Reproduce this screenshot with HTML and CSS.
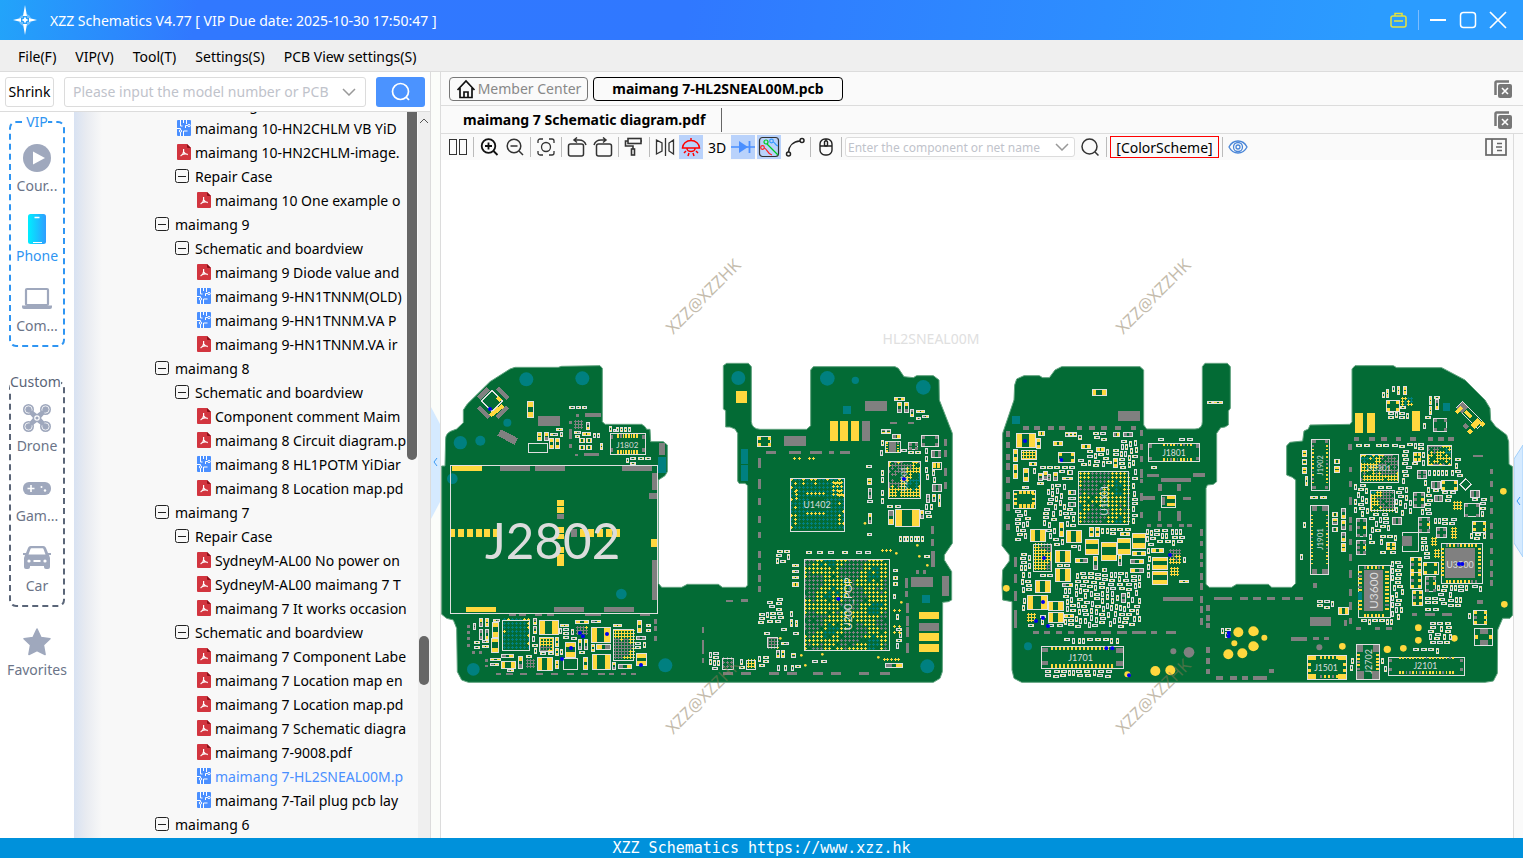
FILE: index.html
```html
<!DOCTYPE html>
<html lang="en">
<head>
    <meta charset="UTF-8">
    <meta name="viewport" content="width=device-width, initial-scale=1.0">
    <title>XZZ Schematics</title>
    <link rel="stylesheet" href="styles.css">
</head>
<body>
    <svg class="sprite" width="0" height="0">
        <symbol id="pdf" viewBox="0 0 14 16">
            <path d="M1 0h9l4 4v11a1 1 0 0 1-1 1H1a1 1 0 0 1-1-1V1a1 1 0 0 1 1-1z" fill="#d2353f"/>
            <path d="M10 0l4 4h-3a1 1 0 0 1-1-1z" fill="#8c0f18"/>
            <path d="M6.600 5v2.500c0 2-1.500 3.500-3 4.500M6.800 8c.8 1.500 2.400 2.400 4 2.600M4.500 11c2-1.200 4-1.500 6-.8" fill="none" stroke="#fff" stroke-width="1.200"/>
        </symbol>
        <symbol id="pcb" viewBox="0 0 14 16">
            <rect width="14" height="16" rx="1" fill="#4a8fff"/>
            <path d="M3.500 0v6h2M6.500 0v3M9.500 0v4M11 5.500H8.500V8M0 8.500h3.500V10M6.500 16v-5h4M3.500 12v4" fill="none" stroke="#fff" stroke-width="1"/>
            <circle cx="12" cy="5.500" r="1.200" fill="#4a8fff" stroke="#fff"/>
            <circle cx="3.500" cy="11" r="1.200" fill="#4a8fff" stroke="#fff"/>
        </symbol>
        <symbol id="minus" viewBox="0 0 14 14">
            <rect x=".5" y=".5" width="13" height="13" rx="2" fill="none" stroke="#222"/>
            <path d="M3 7.500h8" stroke="#222"/>
        </symbol>
        <symbol id="closeall" viewBox="0 0 18 18">
            <path d="M1.500 15V2.500a1 1 0 0 1 1-1H15" fill="none" stroke="#777" stroke-width="2.500"/>
            <rect x="4" y="4" width="14" height="14" rx="2" fill="#777"/>
            <path d="M8 8l6 6M14 8l-6 6" stroke="#fff" stroke-width="1.600"/>
        </symbol>
    </svg>

    <header class="titlebar">
        <svg class="logo" viewBox="0 0 28 32" fill="#fff">
            <path d="M14 1l2 11h-4zM14 31l2-11h-4zM2 16l8-2v4zM26 16l-8-2v4z"/>
            <path d="M12 14v-3a7 7 0 0 0-4 3zM16 14h4a7 7 0 0 0-4-4zM12 18H8a7 7 0 0 0 4 4zM16 18v4a7 7 0 0 0 4-4z" opacity=".35"/>
            <path d="M14 12.500l1.200 2.300 2.300 1.200-2.300 1.200L14 19.500l-1.200-2.300-2.300-1.200 2.300-1.200z"/>
        </svg>
        <h1>XZZ Schematics V4.77 [ VIP Due date: 2025-10-30 17:50:47 ]</h1>
        <div class="window-buttons">
            <button aria-label="Toolbox">
                <svg width="18" height="18" fill="none" stroke="#e6e23c" stroke-width="1.500"><rect x="1" y="5" width="15" height="11" rx="2"/><path d="M5 5V2.500h7V5M4 10h9"/></svg>
            </button>
            <span class="divider"></span>
            <button aria-label="Minimize">
                <svg width="18" height="18"><path d="M1 9h16" stroke="#fff" stroke-width="2"/></svg>
            </button>
            <button aria-label="Maximize">
                <svg width="18" height="18"><rect x="1.500" y="1.500" width="15" height="15" rx="3" fill="none" stroke="#fff" stroke-width="1.500"/></svg>
            </button>
            <button aria-label="Close">
                <svg width="18" height="18"><path d="M1 1l16 16M17 1L1 17" stroke="#fff" stroke-width="1.700"/></svg>
            </button>
        </div>
    </header>

    <nav class="menubar">
        <button>File(F)</button>
        <button>VIP(V)</button>
        <button>Tool(T)</button>
        <button>Settings(S)</button>
        <button>PCB View settings(S)</button>
    </nav>

    <div class="workspace">
        <aside class="sidebar">
            <div class="search-row">
                <button class="shrink">Shrink</button>
                <div class="combo model">
                    <input type="text" aria-label="Model number" placeholder="Please input the model number or PCB">
                    <svg width="14" height="8"><path d="M1 1l6 6 6-6" fill="none" stroke="#999" stroke-width="1.500"/></svg>
                </div>
                <button class="search" aria-label="Search">
                    <svg width="20" height="20" fill="none" stroke="#fff" stroke-width="1.700"><circle cx="9.500" cy="9.500" r="8"/><path d="M15 15l3 3"/></svg>
                </button>
            </div>

            <div class="side-body">
                <div class="categories">
                    <fieldset class="group vip">
                        <legend>VIP</legend>
                        <button class="category">
                            <svg width="28" height="28"><circle cx="14" cy="14" r="14" fill="#9fa8bd"/><path d="M10 7.500v13l12-6.500z" fill="#fff"/></svg>
                            <span>Cour...</span>
                        </button>
                        <button class="category active">
                            <svg width="28" height="30"><defs><linearGradient id="ph"><stop offset="0" stop-color="#0ef"/><stop offset="1" stop-color="#2f9dff"/></linearGradient></defs><rect x="5" y="0" width="18" height="30" rx="2.500" fill="url(#ph)"/><path d="M11.500 3.500h5" stroke="#fff" stroke-width="1.500"/><path d="M10 28.500h9" stroke="#fff"/></svg>
                            <span>Phone</span>
                        </button>
                        <button class="category">
                            <svg width="30" height="28"><rect x="4" y="5" width="22" height="16" rx="1" fill="none" stroke="#9fa8bd" stroke-width="2.200"/><path d="M0 21.500h30v1.500a2 2 0 0 1-2 2H2a2 2 0 0 1-2-2z" fill="#9fa8bd"/></svg>
                            <span>Com...</span>
                        </button>
                    </fieldset>
                    <fieldset class="group custom">
                        <legend>Custom</legend>
                        <button class="category">
                            <svg width="28" height="28" fill="#9fa8bd"><path d="M6 4l8 6 8-6 2 3-6 7 6 7-2 3-8-6-8 6-2-3 6-7-6-7z"/><circle cx="5.500" cy="5.500" r="5.500"/><circle cx="22.500" cy="5.500" r="5.500"/><circle cx="5.500" cy="22.500" r="5.500"/><circle cx="22.500" cy="22.500" r="5.500"/><g fill="none" stroke="#fff" stroke-width=".8"><circle cx="5.500" cy="5.500" r="3.600"/><circle cx="22.500" cy="5.500" r="3.600"/><circle cx="5.500" cy="22.500" r="3.600"/><circle cx="22.500" cy="22.500" r="3.600"/><circle cx="14" cy="14" r="2.200" stroke-width="1.200"/></g><path d="M5 5l5 5M23 5l-5 5M5 23l5-5M23 23l-5-5" stroke="#9fa8bd" stroke-width="3"/></svg>
                            <span>Drone</span>
                        </button>
                        <button class="category">
                            <svg width="28" height="28"><rect y="8" width="28" height="13" rx="6" fill="#9fa8bd"/><path d="M4.500 14.500h7M8 11v7" stroke="#fff" stroke-width="1.600"/><circle cx="18.500" cy="13" r="1" fill="#fff"/><circle cx="22" cy="16.500" r="1.200" fill="#fff"/></svg>
                            <span>Gam...</span>
                        </button>
                        <button class="category">
                            <svg width="28" height="28"><path d="M0 9h3l2-5a3 3 0 0 1 3-2h12a3 3 0 0 1 3 2l2 5h3v2h-2l1 3v9a2 2 0 0 1-2 2h-2a2 2 0 0 1-2-2v-1H7v1a2 2 0 0 1-2 2H3a2 2 0 0 1-2-2v-9l1-3H0z" fill="#9fa8bd"/><path d="M7.500 5l-2 5.500h17l-2-5.500a1 1 0 0 0-1-.8h-11a1 1 0 0 0-1 .8z" fill="#fff"/><circle cx="6" cy="17" r="1.600" fill="#fff"/><circle cx="22" cy="17" r="1.600" fill="#fff"/><path d="M10.500 17h7" stroke="#fff" stroke-width="2"/></svg>
                            <span>Car</span>
                        </button>
                    </fieldset>
                    <button class="category favorites">
                        <svg width="28" height="28"><path d="M14 1l4 8.500 9 1.200-6.600 6.300 1.700 9.500L14 22.500 5.900 26.500 7.600 17 1 10.700l9-1.200z" fill="#9fa8bd" stroke="#9fa8bd" stroke-width="1.500" stroke-linejoin="round"/></svg>
                        <span>Favorites</span>
                    </button>
                </div>

                <ul class="tree">
                    <li class="file l2"><svg><use href="#pcb"/></svg><a href="#">maimang 10</a></li>
                    <li class="file l2"><svg><use href="#pcb"/></svg><a href="#">maimang 10-HN2CHLM VB YiD</a></li>
                    <li class="file l2"><svg><use href="#pdf"/></svg><a href="#">maimang 10-HN2CHLM-image.</a></li>
                    <li class="folder l2"><button><svg><use href="#minus"/></svg>Repair Case</button></li>
                    <li class="file l3"><svg><use href="#pdf"/></svg><a href="#">maimang 10 One example o</a></li>
                    <li class="folder l1"><button><svg><use href="#minus"/></svg>maimang 9</button></li>
                    <li class="folder l2"><button><svg><use href="#minus"/></svg>Schematic and boardview</button></li>
                    <li class="file l3"><svg><use href="#pdf"/></svg><a href="#">maimang 9 Diode value and</a></li>
                    <li class="file l3"><svg><use href="#pcb"/></svg><a href="#">maimang 9-HN1TNNM(OLD)</a></li>
                    <li class="file l3"><svg><use href="#pcb"/></svg><a href="#">maimang 9-HN1TNNM.VA P</a></li>
                    <li class="file l3"><svg><use href="#pdf"/></svg><a href="#">maimang 9-HN1TNNM.VA ir</a></li>
                    <li class="folder l1"><button><svg><use href="#minus"/></svg>maimang 8</button></li>
                    <li class="folder l2"><button><svg><use href="#minus"/></svg>Schematic and boardview</button></li>
                    <li class="file l3"><svg><use href="#pdf"/></svg><a href="#">Component comment Maim</a></li>
                    <li class="file l3"><svg><use href="#pdf"/></svg><a href="#">maimang 8 Circuit diagram.p</a></li>
                    <li class="file l3"><svg><use href="#pcb"/></svg><a href="#">maimang 8 HL1POTM YiDiar</a></li>
                    <li class="file l3"><svg><use href="#pdf"/></svg><a href="#">maimang 8 Location map.pd</a></li>
                    <li class="folder l1"><button><svg><use href="#minus"/></svg>maimang 7</button></li>
                    <li class="folder l2"><button><svg><use href="#minus"/></svg>Repair Case</button></li>
                    <li class="file l3"><svg><use href="#pdf"/></svg><a href="#">SydneyM-AL00 No power on</a></li>
                    <li class="file l3"><svg><use href="#pdf"/></svg><a href="#">SydneyM-AL00 maimang 7 T</a></li>
                    <li class="file l3"><svg><use href="#pdf"/></svg><a href="#">maimang 7 It works occasion</a></li>
                    <li class="folder l2"><button><svg><use href="#minus"/></svg>Schematic and boardview</button></li>
                    <li class="file l3"><svg><use href="#pdf"/></svg><a href="#">maimang 7 Component Labe</a></li>
                    <li class="file l3"><svg><use href="#pdf"/></svg><a href="#">maimang 7 Location map en</a></li>
                    <li class="file l3"><svg><use href="#pdf"/></svg><a href="#">maimang 7 Location map.pd</a></li>
                    <li class="file l3"><svg><use href="#pdf"/></svg><a href="#">maimang 7 Schematic diagra</a></li>
                    <li class="file l3"><svg><use href="#pdf"/></svg><a href="#">maimang 7-9008.pdf</a></li>
                    <li class="file l3 selected"><svg><use href="#pcb"/></svg><a href="#">maimang 7-HL2SNEAL00M.p</a></li>
                    <li class="file l3"><svg><use href="#pcb"/></svg><a href="#">maimang 7-Tail plug pcb lay</a></li>
                    <li class="folder l1"><button><svg><use href="#minus"/></svg>maimang 6</button></li>
                </ul>
                <div class="inner-scroll"><div class="thumb"></div></div>
                <div class="outer-scroll">
                    <svg width="10" height="6"><path d="M1 5l4-4 4 4" fill="none" stroke="#555"/></svg>
                    <div class="thumb"></div>
                </div>
            </div>
        </aside>

        <div class="splitter">
            <button class="handle" aria-label="Collapse left panel"><svg width="9" height="112"><path d="M0 0l9 17v78l-9 17z" fill="#d5eaff"/><path d="M6 51l-3 4 3 4" fill="none" stroke="#3d9bf5"/></svg></button>
        </div>

        <main class="viewer">
            <div class="tabs">
                <button class="tab member">
                    <svg width="20" height="20" fill="none" stroke="#111" stroke-width="1.700"><path d="M1.500 11L10 2l8.500 9M4 9v9.500h12V9M8 18v-5h4v5"/></svg>
                    Member Center
                </button>
                <button class="tab current">maimang 7-HL2SNEAL00M.pcb</button>
                <button class="close-all" aria-label="Close all"><svg width="18" height="18"><use href="#closeall"/></svg></button>
            </div>
            <div class="tabs docs">
                <button class="doc">maimang 7 Schematic diagram.pdf</button>
                <button class="close-all" aria-label="Close all"><svg width="18" height="18"><use href="#closeall"/></svg></button>
            </div>
            <div class="viewer-body">
                <div class="pane">
                    <div class="toolbar">
                        <button aria-label="Split view"><svg width="20" height="20" fill="none" stroke="#333"><rect x="1.500" y="2.500" width="7" height="15"/><rect x="11.500" y="2.500" width="7" height="15"/></svg></button>
                        <span class="sep"></span>
                        <button aria-label="Zoom in"><svg width="20" height="20" fill="none" stroke="#111" stroke-width="1.800"><circle cx="9.500" cy="9" r="6.800"/><path d="M14.500 14l4 4M6 9h7M9.500 5.500v7"/></svg></button>
                        <button aria-label="Zoom out"><svg width="20" height="20" fill="none" stroke="#333" stroke-width="1.500"><circle cx="9" cy="9" r="6.800"/><path d="M14 14l4 4M5.500 9h7"/></svg></button>
                        <span class="sep"></span>
                        <button aria-label="Fit"><svg width="20" height="20" fill="none" stroke="#333" stroke-width="1.300"><circle cx="10" cy="10" r="4.500"/><path d="M2 6V4a2 2 0 0 1 2-2h3M13 2h3a2 2 0 0 1 2 2v2M18 14v2a2 2 0 0 1-2 2h-3M7 18H4a2 2 0 0 1-2-2v-2"/></svg></button>
                        <span class="sep"></span>
                        <button aria-label="Rotate left"><svg width="20" height="20" fill="none" stroke="#333" stroke-width="1.500"><rect x="1.500" y="7" width="15" height="12" rx="2"/><path d="M10 .5L7 3l3 2.500M7 3h5c4 0 6 2 7 5"/></svg></button>
                        <button aria-label="Rotate right"><svg width="20" height="20" fill="none" stroke="#333" stroke-width="1.500"><rect x="3.500" y="7" width="15" height="12" rx="2"/><path d="M10 .5L13 3l-3 2.500M13 3H8C4 3 2 5 1 8"/></svg></button>
                        <span class="sep"></span>
                        <button aria-label="Paint"><svg width="20" height="20" fill="none" stroke="#333" stroke-width="1.600"><rect x="4" y="1.500" width="13" height="5"/><path d="M4 4H1.500v5H9v3M17 4h1"/><rect x="7.500" y="12" width="3" height="6"/></svg></button>
                        <span class="sep"></span>
                        <button aria-label="Mirror"><svg width="20" height="20" fill="none" stroke="#333" stroke-width="1.300"><path d="M1.500 3v14l5.500-3V6zM10.500 1v18M18.500 3v14L14 14V6z"/></svg></button>
                        <button class="on" aria-label="Lamp"><svg width="20" height="20" fill="none" stroke="#f00" stroke-width="1.500"><path d="M1.500 11a8.500 7.500 0 0 1 17 0zM10 3.500V1M6 11.500a4 3 0 0 0 8 0M5 14l-2 2M8 16l-1 3M12 16l1 3M15 14l2 2"/></svg></button>
                        <button aria-label="3D view">3D</button>
                        <button class="on" aria-label="Diode"><svg width="24" height="20"><path d="M0 10h24" stroke="#4a8fff" stroke-width="1.500"/><path d="M8 4v12l9-6z" fill="#4a8fff"/><path d="M18.500 4v12" stroke="#4a8fff" stroke-width="1.800"/></svg></button>
                        <button class="on" aria-label="Nets"><svg width="22" height="22" fill="none" stroke-width="1.200"><rect x="1.500" y="1.500" width="19" height="19" rx="3" stroke="#333"/><path d="M9 8l11 11" stroke="#0c2"/><circle cx="8" cy="6" r="2" stroke="#0c2"/><path d="M15 6c2 0 2 3 5 4" stroke="#39f"/><circle cx="13.500" cy="5" r="1.800" stroke="#39f"/><path d="M6 12c3 0 3 6 8 7" stroke="#f22"/><circle cx="4.500" cy="11.500" r="1.800" stroke="#f22"/></svg></button>
                        <button aria-label="Curve"><svg width="20" height="20" fill="none" stroke="#222" stroke-width="1.500"><path d="M3.500 15C4 9 8 4.500 15 4"/><circle cx="3.500" cy="17" r="2"/><circle cx="17" cy="3.500" r="2"/></svg></button>
                        <span class="sep"></span>
                        <button aria-label="Mouse"><svg width="20" height="20" fill="none" stroke="#222" stroke-width="1.400"><rect x="4" y="2" width="12" height="16" rx="5"/><path d="M4 9h12M10 2v2"/><rect x="8.500" y="4" width="3" height="5" rx="1"/></svg></button>
                        <span class="sep"></span>
                        <div class="combo net">
                            <input type="text" aria-label="Component or net name" placeholder="Enter the component or net name">
                            <svg width="14" height="8"><path d="M1 1l6 6 6-6" fill="none" stroke="#999" stroke-width="1.500"/></svg>
                        </div>
                        <button aria-label="Find"><svg width="20" height="20" fill="none" stroke="#333" stroke-width="1.500"><circle cx="9.500" cy="9.500" r="7.500"/><path d="M15 15l3.500 3.500"/></svg></button>
                        <span class="sep"></span>
                        <button class="scheme">[ColorScheme]</button>
                        <span class="sep"></span>
                        <button aria-label="Show"><svg width="20" height="20" fill="none" stroke="#4a86d8" stroke-width="1.300"><path d="M1 10c4-8 14-8 18 0-4 8-14 8-18 0z"/><circle cx="10" cy="10" r="4.500"/><circle cx="10" cy="10" r="2"/></svg></button>
                        <button class="panel-toggle" aria-label="Toggle panel"><svg width="22" height="20" fill="none" stroke="#666" stroke-width="1.700"><rect x="1" y="2" width="20" height="16"/><path d="M7 2v16" /><path d="M12 6.500h5M11 10h6M12 13.500h5" stroke-width="1.300"/></svg></button>
                    </div>
                    <svg id="board" class="board" viewBox="441 160 1072 678"></svg>
                </div>
                <div class="right-strip">
                    <button class="handle" aria-label="Expand right panel"><svg width="9" height="112"><path d="M9 0L0 14v84l9 14z" fill="#d5eaff" stroke="#a3d0fb"/><path d="M6 52l-3 4 3 4" fill="none" stroke="#3d9bf5"/></svg></button>
                </div>
            </div>
        </main>
    </div>

    <footer class="statusbar">XZZ Schematics https://www.xzz.hk</footer>

    <script src="board.js"></script>
</body>
</html>
```
FILE: styles.css
```css
* {
    margin: 0;
    padding: 0;
    box-sizing: border-box;
}

body {
    height: 100vh;
    display: flex;
    flex-direction: column;
    overflow: hidden;
    background: #fff;
    color: #000;
    font-family: "Noto Sans", "Open Sans", sans-serif;
    font-size: 14px;
}

button {
    border: none;
    background: none;
    font: inherit;
    color: inherit;
    cursor: pointer;
}

svg {
    display: block;
    flex-shrink: 0;
}

.sprite {
    position: absolute;
}

/* Title bar */
.titlebar {
    height: 40px;
    flex-shrink: 0;
    display: flex;
    align-items: center;
    background: linear-gradient(100deg, #22a4fa 0%, #3178ff 13%, #3078ff 45%, #2b9cff 90%);
    color: #fff;
    padding: 0 16px 0 11px;
}

.logo {
    width: 28px;
    height: 32px;
}

.titlebar h1 {
    font-size: 14px;
    font-weight: 400;
    margin-left: 11px;
}

.window-buttons {
    margin-left: auto;
    display: flex;
    align-items: center;
    gap: 12px;
}

.divider {
    width: 1px;
    height: 20px;
    margin: 0 -2px;
    background: #7dbdff;
}

/* Menu bar */
.menubar {
    height: 32px;
    flex-shrink: 0;
    display: flex;
    gap: 19px;
    padding: 2px 18px 0;
    background: #efefef;
    border-bottom: 1px solid #dcdcdc;
}

.workspace {
    flex: 1;
    min-height: 0;
    display: flex;
}

/* Sidebar */
.sidebar {
    width: 431px;
    flex-shrink: 0;
    display: flex;
    flex-direction: column;
    border-right: 1px solid #dcdcdc;
}

.search-row {
    height: 40px;
    flex-shrink: 0;
    display: flex;
    align-items: center;
    padding: 0 5px;
    border-bottom: 1px solid #dcdcdc;
}

.shrink {
    width: 49px;
    height: 30px;
    border: 1px solid #dcdcdc;
    border-radius: 3px;
    white-space: nowrap;
}

.combo {
    display: flex;
    align-items: center;
    border: 1px solid #dcdcdc;
    border-radius: 3px;
    background: #fff;
}

.combo input {
    flex: 1;
    min-width: 0;
    border: none;
    outline: none;
    background: none;
    font: inherit;
}

.combo input::placeholder {
    color: #bfc3cb;
}

.model {
    flex: 1;
    height: 30px;
    margin: 0 10px;
    padding: 0 9px 0 8px;
}

.search {
    width: 49px;
    height: 30px;
    border-radius: 3px;
    background: #4b93ff;
    display: flex;
    align-items: center;
    justify-content: center;
}

.side-body {
    flex: 1;
    min-height: 0;
    display: flex;
}

.categories {
    width: 74px;
    flex-shrink: 0;
}

.group {
    width: 56px;
    min-width: 0;
    margin: 0 9px 25px;
    padding-bottom: 3px;
    border: 2px dashed #5a6578;
    border-radius: 7px;
}

.group legend {
    margin: 0 auto;
    line-height: 20px;
    color: #5a6578;
}

.vip {
    border-color: #2f95f2;
}

.vip legend {
    color: #2f95f2;
}

.custom {
    margin-bottom: 9px;
}

.custom legend {
    margin: 0 -1px;
}

.category {
    width: 100%;
    height: 70px;
    padding-top: 12px;
    display: flex;
    flex-direction: column;
    align-items: center;
    gap: 4px;
    color: #6b7488;
    line-height: 20px;
}

.category.active {
    color: #2f95f2;
    gap: 2px;
}

.tree {
    flex: 1;
    min-width: 0;
    overflow: hidden;
    list-style: none;
    background: linear-gradient(90deg, #d8e2f2, #e8ebf1 12px, #f8f8f8 28px);
}

.tree li {
    height: 24px;
    display: flex;
    align-items: center;
    white-space: nowrap;
}

.tree li:first-child {
    margin-top: -20px;
}

.tree a {
    color: inherit;
    text-decoration: none;
}

.file svg {
    width: 14px;
    height: 16px;
    margin-right: 4px;
}

.folder button {
    display: flex;
    align-items: center;
}

.folder svg {
    width: 14px;
    height: 14px;
    margin-right: 6px;
}

.folder.l1 {
    padding-left: 81px;
}

.folder.l2 {
    padding-left: 101px;
}

.file.l2 {
    padding-left: 103px;
}

.file.l3 {
    padding-left: 123px;
}

.tree .selected {
    color: #4a8fff;
}

.inner-scroll {
    width: 11px;
    background: #f8f8f8;
}

.inner-scroll .thumb {
    width: 10px;
    height: 348px;
    background: #666;
    border-radius: 0 0 5px 5px;
}

.outer-scroll {
    width: 12px;
    background: #efefef;
    display: flex;
    flex-direction: column;
    align-items: center;
    padding-top: 6px;
}

.outer-scroll .thumb {
    width: 10px;
    height: 49px;
    margin-top: 512px;
    background: #666;
    border-radius: 5px;
}

.splitter {
    width: 9px;
    flex-shrink: 0;
    background: #fbfdfa;
    display: flex;
    align-items: center;
    padding-top: 16px;
}

.handle {
    width: 9px;
}

/* Viewer */
.viewer {
    flex: 1;
    min-width: 0;
    display: flex;
    flex-direction: column;
    border-left: 1px solid #dcdcdc;
}

.tabs {
    height: 34px;
    flex-shrink: 0;
    display: flex;
    align-items: center;
    gap: 5px;
    padding: 0 11px 0 8px;
    background: #fafafa;
    border-bottom: 1px solid #dcdcdc;
}

.docs {
    height: 28px;
}

.tab {
    height: 24px;
    display: flex;
    align-items: center;
    justify-content: center;
    gap: 2px;
    border: 1px solid #777;
    border-radius: 4px;
    white-space: nowrap;
}

.member {
    width: 139px;
    color: #888;
}

.current {
    width: 250px;
    border-color: #000;
    font-weight: 700;
}

.doc {
    height: 24px;
    padding: 0 16px 0 14px;
    border-right: 1px solid #666;
    font-weight: 700;
}

.close-all {
    margin-left: auto;
}

.viewer-body {
    flex: 1;
    min-height: 0;
    display: flex;
}

.pane {
    flex: 1;
    min-width: 0;
    display: flex;
    flex-direction: column;
}

.toolbar {
    height: 26px;
    flex-shrink: 0;
    display: flex;
    align-items: center;
    gap: 2px;
    padding: 0 5px;
    background: #fafafa;
}

.toolbar button {
    min-width: 24px;
    height: 24px;
    display: flex;
    align-items: center;
    justify-content: center;
}

.toolbar .on {
    background: #b9d2fb;
}

.sep {
    width: 1px;
    height: 20px;
    margin: 0 1px;
    background: #bbb;
}

.net {
    width: 230px;
    height: 20px;
    padding: 0 5px 0 2px;
    font-size: 12px;
}

.net + button {
    margin: 0 1px;
}

.toolbar .scheme {
    width: 109px;
    height: 22px;
    border: 1px solid #f00;
}

.toolbar .panel-toggle {
    margin-left: auto;
}

.board {
    flex: 1;
    min-height: 0;
    width: 100%;
    background: #fff;
}

.board text {
    text-anchor: middle;
    dominant-baseline: central;
    fill: #dcdcdc;
}

.board .name {
    font-family: Lato, sans-serif;
}

.board .title {
    fill: #e0e0e0;
    font-size: 14px;
}

.board .watermark {
    fill: #8a7a5a;
    fill-opacity: 0.5;
    font-size: 17px;
}

.board rect,
.board .pads {
    shape-rendering: crispEdges;
}

.right-strip {
    width: 10px;
    flex-shrink: 0;
    background: #fafafa;
    border-left: 1px solid #dcdcdc;
    display: flex;
    align-items: center;
    padding-top: 30px;
}

.statusbar {
    height: 20px;
    flex-shrink: 0;
    background: #0091db;
    color: #fff;
    text-align: center;
    line-height: 20px;
    font-family: "DejaVu Sans Mono", monospace;
    font-size: 15px;
}
```
FILE: board.js
```js
// Board drawing. Panels use thirds of a pixel as their unit.
const Y = '#ffd83e';
const G = '#808080';
const T = '#008080';
const W = '#e0e0e0';
const B = '#0000f0';
const BOARD = '#036b35';

let out = [];
let used = [];
let seed = 7;

function rnd() {
    seed = (seed * 16807) % 2147483647;
    return seed / 2147483647;
}

// whole pixels
function snap(v) {
    return Math.round(v / 3) * 3;
}

function rows(s) {
    return s.trim().split(';').filter(v => v.trim()).map(v => v.trim().split(',').map(Number));
}

function rect(x, y, w, h, c) {
    out.push(`<rect x="${x}" y="${y}" width="${w}" height="${h}" fill="${c}"/>`);
}

function fillAll(c, s) {
    rows(s).forEach(([x, y, w, h]) => {
        rect(x, y, w, h, c);
        used.push([x, y, w, h]);
    });
}

function frame(x, y, w, h) {
    out.push(`<rect x="${snap(x) + 1.5}" y="${snap(y) + 1.5}" width="${snap(w)}" height="${snap(h)}" fill="none" stroke="${W}" stroke-width="3"/>`);
    used.push([x, y, w, h]);
}

function dots(c, s) {
    rows(s).forEach(([x, y, r]) => out.push(`<circle cx="${x}" cy="${y}" r="${r || 6}" fill="${c}"/>`));
}

// two-pad part
function part(x, y, w, h, a, b) {
    used.push([x, y, w, h]);
    x = snap(x);
    y = snap(y);
    w = Math.max(9, snap(w));
    h = Math.max(9, snap(h));
    rect(x, y, w, h, W);
    rect(x + 3, y + 3, w - 6, h - 6, BOARD);
    if (w > h) {
        const p = Math.max(3, snap((w - 6) * 0.36));
        rect(x + 3, y + 3, p, h - 6, a);
        rect(x + w - 3 - p, y + 3, p, h - 6, b);
    } else {
        const p = Math.max(3, snap((h - 6) * 0.36));
        rect(x + 3, y + 3, w - 6, p, a);
        rect(x + 3, y + h - 3 - p, w - 6, p, b);
    }
}

function parts(s) {
    rows(s).forEach(([x, y, w, h]) => part(x, y, w, h, rnd() < 0.75 ? Y : G, rnd() < 0.7 ? Y : G));
}

// big inductors: pads on left and right, or top and bottom
function coils(s) {
    rows(s).forEach(([x, y, w, h, v]) => {
        x = snap(x);
        y = snap(y);
        w = snap(w);
        h = snap(h);
        if (v) {
            const p = snap(h * 0.3);
            rect(x, y, w, p, Y);
            rect(x, y + h - p, w, p, Y);
        } else {
            const p = snap(w * 0.3);
            rect(x, y, p, h, Y);
            rect(x + w - p, y, p, h, Y);
        }
        frame(x, y, w, h);
    });
}

// ball grid, drawn as crosses
function grid(x, y, w, h, step, mix, hole) {
    const d = { [Y]: '', [G]: '', [T]: '' };
    for (let j = y + 4; j < y + h; j += step) {
        for (let i = x + 4; i < x + w; i += step) {
            const u = (i - x) / w, v = (j - y) / h;
            const clump = Math.sin(i * 0.05) + Math.cos(j * 0.06 + i * 0.03) + rnd();
            if (hole && rnd() < hole) continue;
            let c = Y;
            if (mix === 'teal') c = u > 0.1 && u < 0.85 && v > 0.15 ? T : (rnd() < 0.4 ? Y : T);
            else if (mix === 'gray') c = clump > 1 ? G : Y;
            else if (mix === 'all') c = clump > 0.9 ? G : (clump < -1 ? T : Y);
            const px = snap(i) + 1.5, py = snap(j) + 1.5;
            d[c] += `M${px - 4.5} ${py}h9M${px} ${py - 4.5}v9`;
        }
    }
    for (const c in d) {
        if (d[c]) out.push(`<path class="pads" d="${d[c]}" stroke="${c}" stroke-width="3"/>`);
    }
    used.push([x, y, w, h]);
}

function pins(x, y, n, dx, dy, w, h) {
    for (let i = 0; i < n; i++) {
        rect(x + i * dx, y + i * dy, w, h, rnd() < 0.85 ? Y : G);
    }
}

function ic(s) {
    rows(s).forEach(([x, y, w, h]) => {
        frame(x, y, w, h);
        const c = rnd() < 0.5 ? Y : G;
        [[3, 3], [w - 9, 3], [3, h - 9], [w - 9, h - 9]].forEach(([a, b]) => rect(x + a, y + b, 9, 9, c));
        if (h > 40) {
            rect(x + 3, y + h / 2 - 5, 9, 9, G);
            rect(x + w - 9, y + h / 2 - 5, 9, 9, Y);
        }
    });
}

function free(x, y, w, h) {
    return !used.some(([a, b, c, d]) => x < a + c + 3 && a < x + w + 3 && y < b + d + 3 && b < y + h + 3);
}

// pack small parts into what is left of an area
function pack(s) {
    rows(s).forEach(([x, y, w, h]) => {
        for (let j = snap(y); j <= y + h - 7; j += 3) {
            for (let i = snap(x); i <= x + w - 7; i += 3) {
                const flat = rnd() < 0.6;
                const pw = flat ? 18 : 9, ph = flat ? 9 : 18;
                if (i + pw <= x + w + 3 && j + ph <= y + h + 3 && rnd() < 0.5 && free(i, j, pw, ph)) {
                    part(i, j, pw, ph, rnd() < 0.7 ? Y : G, rnd() < 0.6 ? Y : G);
                }
            }
        }
    });
}

function label(t, x, y, size, turn) {
    const r = turn ? ` transform="rotate(-90 ${x} ${y})"` : '';
    out.push(`<text class="name" x="${x}" y="${y}" font-size="${size}"${r}>${t}</text>`);
}

function turned(x, y, w, h, a, c) {
    out.push(`<rect x="${x - w / 2}" y="${y - h / 2}" width="${w}" height="${h}" fill="${c}" transform="rotate(${a} ${x} ${y})"/>`);
}

function outline(ox, d) {
    out.push(`<path transform="translate(${ox} 355) scale(.333333333)" d="${d}" fill="${BOARD}" stroke="#5fa27d" stroke-width="3" stroke-linejoin="round"/>`);
}

function panel(ox, draw) {
    used = [];
    out.push(`<g transform="translate(${ox} 355) scale(.333333333)">`);
    draw();
    out.push('</g>');
}

out.push('<text class="title" x="931" y="338">HL2SNEAL00M</text>');

outline(440, 'M5 333L15 333L17 250Q18 236 32 229L50 222L70 203V165L82 147L150 80L210 42L225 37H355L365 34L480 32L487 40V200L495 208H605L615 215L620 223H630L632 260H670L682 270V350L675 362L655 375V685L665 697H725L742 688H835L847 697H917L923 690V392L915 385H897L893 378V235L885 222L870 216H857V167L850 162V32L860 25H925L934 35V200Q936 222 960 223H1100L1112 212V45L1120 35H1365L1375 40L1392 65L1420 68L1430 62H1480L1497 75L1498 135L1537 235V565L1513 600V615L1535 650V735L1525 740L1508 742L1507 950L1500 970L1480 982H85L65 975L52 950L50 820L40 795L20 790L5 778z');
outline(1000, 'M8 235L42 135L44 90L50 72L72 62H118L128 68H148L165 45L185 35H420L431 45V210L440 222H585Q607 222 607 200V35L615 25H682L691 35V160L685 168V210L675 216L662 218L650 235V380L640 388L622 390L618 400V688L628 697H695L710 688H805L815 697H875L887 685V375L877 367L860 360V272L870 262L908 258L912 228L925 222L930 210L1050 208L1056 200V42L1065 32H1180L1190 38H1325L1395 75L1455 135L1470 160L1472 195L1487 215L1520 240L1526 260L1527 328L1538 335V780L1530 790H1508L1493 825L1492 955L1480 978L1455 982H65L42 970L36 945V740L8 735L6 690L8 645L28 618V600L6 572z');

// front, left part
panel(440, () => {
    dots(T, '259,73,21;427,70,21;202,203,12;61,263,20;121,257,15;37,371,16;544,717,16;100,943,19;676,931,21');
    turned(131, 115, 40, 14, -45, G);
    turned(188, 115, 44, 14, 45, G);
    turned(131, 172, 44, 14, 45, G);
    turned(186, 172, 44, 14, -45, G);
    turned(203, 246, 58, 22, 28, G);
    out.push(`<rect x="134" y="116" width="44" height="44" fill="none" stroke="${W}" stroke-width="3" transform="rotate(45 156 138)"/>`);
    turned(177, 132, 16, 10, 45, Y);
    turned(170, 167, 50, 12, -38, Y);
    fillAll(G, '294,183,66,30;408,178,10,8;435,174,48,12;387,197,9,10;387,222,9,30;387,267,9,12;405,297,9,6;432,294,45,9;657,264,18,36;180,331,90,17;285,331,90,17;546,331,90,17;636,354,16,51;627,414,25,17;351,477,21,15;393,522,18,24;636,615,16,120;342,756,90,15;492,756,90,15;207,777,20,6;237,777,20,6;285,777,20,6;321,777,20,6;435,777,48,6;600,777,30,6;81,810,9,9;81,828,9,9;81,846,9,9;81,867,9,9;96,888,9,9;117,888,9,9;135,912,9,9;135,930,9,6;642,792,9,15;642,813,9,15;642,843,9,15;786,816,6,18;786,855,6,27;786,882,6,15;786,909,6,15;168,954,15,6;198,954,21,6;240,954,21,6;288,954,21,6;333,954,21,6;381,954,21,6;423,954,21,6;474,954,21,6;507,954,15,6;543,954,15,6;573,954,15,6');
    fillAll(Y, '36,331,90,17;351,435,21,18;351,456,21,18;351,516,21,18;351,537,21,15;351,576,21,18;351,597,21,36;30,522,15,24;54,522,18,24;81,522,18,24;108,522,18,24;132,522,18,24;159,522,18,24;420,522,18,24;443,522,19,24;471,522,18,24;497,522,18,24;522,522,18,24;633,552,18,24;78,756,90,15');
    fillAll(T, '654,306,24,48');
    out.push(`<rect x="31.5" y="331.5" width="621" height="444" fill="none" stroke="${W}" stroke-width="3"/>`);
    frame(511, 235, 105, 63);
    pins(532, 238, 8, 8, 0, 5, 11);
    pins(532, 285, 8, 8, 0, 5, 11);
    fillAll(G, '514,240,6,12;606,240,8,12;514,280,6,12;606,280,8,12');
    frame(265, 265, 57, 27);
    grid(402, 195, 30, 28, 9, 'all');
    parts('262,138,22,50;387,154,18,9;408,154,16,9;427,154,16,9;348,219,20,9;292,232,14,26;311,232,14,26;330,235,24,10;361,232,8,16;327,249,15,32;345,249,15,32;403,228,20,8;406,239,16,8;426,232,26,12;438,202,12,24;417,249,18,14;438,249,18,14;417,269,18,16;438,269,18,16;460,234,8,16;471,234,8,16;480,264,8,20;508,214,8,18;519,222,8,10;529,217,8,16;541,217,8,16;553,217,8,16;565,217,8,16;558,308,8,16;570,307,18,8;594,306,18,8;615,306,18,8;570,320,18,8');
    label('J2802', 338, 554, 148);
    label('J1802', 562, 270, 24);

    coils('298,796,56,42;454,816,58,44;457,897,54,44;292,906,46,38;156,802,18,44,1;153,848,20,42,1;183,918,42,20;376,860,30,44,1');
    grid(187, 788, 82, 98, 12, 'teal');
    frame(187, 796, 82, 90);
    grid(297, 846, 42, 42, 9, 'gray');
    frame(297, 846, 42, 42);
    grid(257, 912, 28, 30, 9, 'gray');
    grid(408, 812, 34, 30, 9, 'all');
    grid(520, 822, 60, 92, 9, 'gray');
    frame(520, 822, 60, 92);
    frame(370, 908, 42, 34);
    parts('118,790,12,28;118,822,12,32;135,790,12,28;135,822,12,32;98,804,10,20;160,792,20,7;103,858,18,8;126,856,22,10;103,873,18,8;126,871,22,10;518,808,28,10;592,795,16,40;588,844,30,12;588,895,32,40;534,928,42,14;516,922,12,24;430,905,16,38;454,868,12,24;468,866,44,18;405,796,42,12;452,796,30,8;360,806,26,10;150,908,34,9;150,924,28,9;200,942,20,7;235,904,16,40;184,897,40,12;415,852,12,32;433,852,12,32;345,846,12,30;345,880,12,24;345,916,12,28;618,808,16,8;618,822,16,8;280,790,12,20;280,814,12,24');
    pack('276,842,18,60;290,892,60,12;358,820,46,36;358,860,18,50;392,840,50,20;408,886,40,16;586,858,34,32;255,896,36,12;804,890,36,60');
    dots(B, '150,162;420,834;429,844;393,879;501,837;366,912;603,930');
});

// front, right part
panel(715, () => {
    dots(T, '70,69,21;337,70,22;421,76,11;625,97,22;637,934,21');
    fillAll(T, '384,153,24,24;78,282,21,46;78,331,21,46;621,720,24,24');
    fillAll(Y, '63,108,33,36;345,198,24,60;375,198,24,60;408,198,24,60;612,771,60,21;612,834,60,24;612,867,60,24');
    fillAll(G, '441,198,24,60;450,138,66,30;207,243,66,30;612,804,60,24;588,666,66,30;681,663,21,60;153,288,30,9;222,288,36,9;285,288,36,9;342,288,15,9;375,288,30,9;129,309,9,30;129,372,9,30;129,429,9,21;129,483,9,21;129,531,9,18;129,588,9,21;129,624,9,21;129,660,9,21;129,693,9,18;525,201,21,6;579,201,18,6;687,252,9,21;687,285,9,21;687,339,9,24;687,381,9,21;648,513,9,24;648,552,9,21;648,588,12,48;603,645,9,12;624,645,9,12;570,669,9,30;570,708,9,18;573,744,9,30;573,783,9,30;573,816,9,30;573,864,9,30;33,735,21,6;78,732,21,9;24,951,30,9;78,951,30,9;162,951,30,9;216,951,30,9;294,951,30,9;348,951,30,9;432,951,30,9;495,951,30,9');
    ic('127,243,40,31;619,240,50,32;580,262,28,22;649,284,28,22;650,320,26,20;650,388,28,20');
    grid(225, 369, 161, 160, 12, 'teal');
    frame(225, 369, 161, 160);
    rect(285, 426, 42, 42, BOARD);
    grid(273, 410, 60, 10, 12);
    grid(273, 470, 60, 10, 12);
    grid(238, 400, 14, 30, 12);
    grid(350, 376, 34, 52, 12);
    grid(265, 610, 256, 274, 12, 'all', 0.06);
    frame(267, 612, 254, 272);
    grid(518, 318, 96, 112, 9, 'all', 0.2);
    frame(518, 319, 96, 112);
    coils('541,462,72,50');
    frame(510, 258, 44, 34);
    rect(522, 261, 21, 30, G);
    pins(512, 262, 4, 0, 8, 7, 4);
    pins(545, 262, 4, 0, 8, 7, 4);
    grid(155, 845, 33, 33, 9, 'all');
    frame(157, 847, 30, 30);
    grid(20, 905, 34, 38, 12, 'all');
    frame(20, 908, 33, 34);
    grid(94, 912, 28, 30, 9, 'gray');
    frame(94, 914, 28, 28);
    parts('454,331,18,8;457,369,16,20;460,398,12,34;457,436,18,7;460,474,12,32;457,534,16,8;519,466,18,44;614,466,12,28;497,222,14,14;514,222,14,14;538,126,32,12;546,142,14,32;568,142,14,32;586,162,12,24;604,166,26,10;620,180,20,7;602,186,16,6;532,238,28,14;634,418,12,26;650,416,12,24;670,416,8,38;552,544,8,18;563,544,8,18;574,544,8,18;585,544,8,18;596,544,8,18;607,544,8,18;617,544,6,18;273,588,18,7;231,628,20,8;231,646,20,8;231,664,20,8;231,682,20,14;534,642,16,7;534,662,16,12;534,680,16,12;534,718,8,16;510,924,54,16;183,886,12,24;198,886,12,24;228,894,16,16;225,768,10,18;225,792,10,24;239,794,10,20;235,832,18,7;198,818,18,7;198,862,24,10;147,832,18,7');
    pack('298,588,64,9;370,588,40,9;424,588,56,9;182,586,50,40;497,322,10,130;496,240,14,66;556,282,60,22;622,230,44,9;612,278,32,28;630,300,18,80;650,344,18,40;670,240,8,40;180,728,36,10;155,738,44,28;129,770,20,42;150,770,60,42;186,930,78,16;292,914,50,14;543,774,12,22;543,820,24,60;0,908,16,36;70,912,20,28;126,904,44,36;630,440,24,50;534,230,28,8;628,600,16,14;516,450,46,10');
    grid(234, 306, 22, 6, 14);
    grid(278, 306, 22, 6, 12);
    grid(498, 582, 30, 6, 12);
    grid(502, 909, 50, 6, 11);
    grid(532, 762, 30, 80, 16, '', 0.4);
    dots(Y, '450,505,4;544,595,4;607,571,4;613,604,4;637,631,4;559,742,4;259,901,4;322,898,4;490,907,4;271,931,4;196,850,4');
    label('U1402', 306, 449, 27);
    label('U200_POP', 396, 747, 32, 1);
    label('U2201', 567, 372, 24, 1);
    dots(B, '370,732,6;567,372,6');
});

// back, left part
panel(1000, () => {
    fillAll(T, '36,183,24,24');
    fillAll(G, '354,168,66,30;441,357,36,9;579,354,36,12;483,369,90,12;474,387,12,21;531,387,12,21;429,423,36,12;549,426,24,9;474,468,9,30;531,468,12,30;489,726,90,12;642,726,54,9;720,726,24,9;759,726,21,9;69,213,18,12;102,213,18,12;144,213,18,12;177,213,18,12;231,213,14,12;267,213,18,12;303,213,18,12;345,213,18,12;393,213,15,12;18,228,12,18;18,261,12,18;18,297,12,18;18,324,12,21;18,366,12,18;18,411,12,21;18,447,12,21;18,507,12,18;420,225,9,18;420,267,9,18;420,303,9,18;420,342,9,27;420,372,9,12;420,414,9,24;420,471,9,18;441,507,12,9;471,507,15,9;501,507,15,9;537,507,15,9;561,507,15,9;600,522,9,21;600,558,9,15;600,594,9,18;600,621,9,15;600,654,9,21;600,684,9,21;600,723,9,21;600,753,9,21;600,789,9,21;42,606,9,30;42,657,9,27;42,708,9,30;42,765,9,54;99,828,18,9;132,828,18,9;168,828,18,9;204,828,18,9;252,828,36,9;303,828,30,9;351,828,30,9;396,828,42,9;453,828,18,9;498,828,30,9;618,750,12,18;618,780,12,18;618,804,12,15;618,876,12,18;618,909,12,18;618,942,12,15;648,963,21,12;690,963,21,12;726,963,18,12;759,963,21,12');
    dots(Y, '19,700,10;466,948,15;511,946,15;715,832,15;760,829,15;703,865,9;685,898,15;727,895,15;760,874,15;382,958,9');
    dots(G, '520,889,9;567,892,16');
    dots(T, '84,874,12');
    coils('47,235,56,42;276,101,42,18;90,522,46,37;199,526,46,37;256,552,38,46,1;303,561,44,54,1;351,549,38,48,1;396,534,38,46,1;457,607,46,37,1;457,648,46,38,1;165,586,46,37;165,639,46,38;106,676,46,37;80,720,60,43;144,738,44,28;144,772,44,30');
    frame(484, 420, 42, 35);
    rect(486, 425, 9, 26, G);
    rect(500, 422, 25, 10, Y);
    rect(500, 443, 25, 10, Y);
    ic('175,291,48,31');
    frame(40, 406, 66, 54);
    pins(58, 408, 4, 12, 0, 7, 10);
    pins(58, 448, 4, 12, 0, 7, 10);
    pins(42, 414, 3, 0, 14, 9, 7);
    pins(95, 414, 3, 0, 14, 9, 7);
    frame(124, 874, 247, 67);
    pins(152, 875, 16, 12, 0, 6, 11);
    pins(152, 927, 16, 12, 0, 6, 11);
    fillAll(G, '126,878,18,13;126,918,18,13;347,880,22,14;347,918,22,14');
    frame(445, 265, 153, 54);
    pins(490, 267, 9, 10, 0, 5, 7);
    pins(490, 310, 9, 10, 0, 5, 7);
    fillAll(G, '447,268,9,10;587,268,9,10;447,306,9,10;587,306,9,10');
    grid(235, 349, 151, 160, 12, 'all', 0.05);
    frame(235, 349, 151, 160);
    grid(64, 286, 44, 26, 9);
    frame(64, 286, 44, 26);
    grid(100, 564, 54, 82, 9, 'gray');
    frame(100, 566, 54, 80);
    grid(505, 582, 36, 44, 9, 'gray');
    grid(510, 636, 28, 28, 9);
    grid(80, 772, 30, 26, 9, 'gray');
    parts('114,229,20,15;108,249,14,32;160,258,30,14;68,338,17,42;40,283,14,40;40,326,14,46;86,322,24,12;66,392,20,8;114,354,14,24;110,382,20,8;622,139,18,6;640,139,30,8;244,268,30,14;176,500,14,44;226,608,40,16;278,602,14,42;454,580,40,16;396,588,42,14;390,612,42,14;390,640,42,16;354,600,12,34;268,516,14,30;286,516,14,30;192,776,30,12;186,684,34,12;364,714,14,30;306,640,14,12;538,676,30,9;360,532,30,12;340,310,14,30;200,346,18,14;186,366,34,10;160,352,14,26;130,348,14,28;140,356,12,20;203,404,24,14;203,426,24,10;203,442,24,14;340,232,22,14;368,230,30,16;288,276,26,14;194,232,12,16;206,232,12,16;220,232,12,16;234,240,12,14');
    pack('248,230,14,16;280,230,50,26;358,254,54,86;262,282,92,58;235,312,60,30;112,334,100,30;140,386,62,80;130,460,98,60;395,340,16,180;300,518,90,24;226,652,196,166;435,522,118,50;440,576,12,100;545,604,12,50;45,465,45,95;60,595,35,118;112,656,44,14;138,520,60,54;162,626,50,10;212,570,36,20;188,700,40,116;66,730,10,80;64,806,52,14;120,780,20,40;144,806,50,12;190,848,165,16;135,945,200,22;445,333,36,8;465,249,36,8;538,249,56,8;664,820,28,37;174,334,50,8;96,340,10,14');
    label('U1001', 312, 436, 30, 1);
    label('J1701', 242, 908, 27);
    label('J1801', 522, 291, 26);
    dots(B, '75,258;184,315;132,609;510,600;129,741;108,798;129,789;144,813;319,880;337,880;387,961;686,834;686,844');
});

// back, right part
panel(1255, () => {
    fillAll(Y, '300,174,24,60;336,174,24,60;471,168,24,60');
    fillAll(T, '564,144,21,24');
    fillAll(G, '297,246,15,12;342,246,18,12;378,246,18,12;423,246,15,12;465,246,18,12;519,246,15,12;549,246,18,12;579,246,18,12;279,267,12,18;282,336,9,15;282,378,9,18;282,426,9,24;282,486,9,18;282,510,9,18;282,552,9,18;282,597,9,21;282,645,9,24;282,702,9,21;282,741,9,24;282,789,9,18;165,786,63,27;174,684,12,15;0,726,18,9;36,726,24,9;81,726,24,9;120,726,24,9;108,846,48,12;174,846,18,9;207,846,15,9;267,795,9,18;654,300,30,6;705,342,9,15;705,378,9,18;705,423,9,18;705,459,9,18;705,504,9,18;705,534,9,18;705,579,9,18;705,615,9,18;705,648,9,18;705,675,9,18;666,735,18,12;471,774,15,9;510,774,30,9;561,774,30,9;303,816,15,9;360,816,15,9;393,816,18,9;42,942,15,12;6,963,30,12');
    dots(Y, '0,830,11;28,848,9;0,874,11;262,874,10;397,883,11;445,880,10;490,818,10;490,856,10;598,850,10;745,409,10;748,748,10');
    dots(G, '193,877,9');
    frame(557, 564, 123, 121);
    pins(572, 566, 9, 11, 0, 6, 9);
    pins(572, 675, 9, 11, 0, 6, 9);
    pins(559, 580, 8, 0, 11, 9, 6);
    pins(668, 580, 8, 0, 11, 9, 6);
    rect(570, 579, 90, 90, G);
    frame(308, 630, 95, 157);
    pins(326, 632, 6, 11, 0, 6, 9);
    pins(326, 776, 6, 11, 0, 6, 9);
    pins(310, 648, 11, 0, 11, 11, 6);
    pins(390, 648, 11, 0, 11, 11, 6);
    rect(327, 645, 57, 123, G);
    rect(310, 710, 12, 26, T);
    grid(314, 296, 116, 84, 9, 'all', 0.15);
    frame(316, 297, 115, 83);
    grid(345, 406, 71, 60, 9, 'all', 0.15);
    frame(345, 406, 71, 60);
    grid(514, 268, 75, 62, 9, 'all', 0.15);
    frame(516, 270, 73, 61);
    grid(436, 124, 36, 26, 9, 'all');
    frame(169, 253, 54, 153);
    pins(171, 270, 11, 0, 11, 7, 5);
    pins(213, 270, 11, 0, 11, 7, 5);
    fillAll(G, '172,256,10,9;210,256,10,9;172,394,10,9;210,394,10,9');
    frame(166, 451, 55, 208);
    pins(168, 480, 14, 0, 11, 6, 4);
    pins(213, 480, 14, 0, 11, 6, 4);
    fillAll(G, '170,453,16,14;202,453,16,14;170,642,16,14;202,642,16,14');
    frame(157, 901, 118, 72);
    pins(195, 903, 6, 12, 0, 7, 10);
    pins(195, 960, 6, 12, 0, 7, 10);
    fillAll(Y, '158,903,24,12;250,903,24,12;158,958,24,14;250,958,24,14;158,925,10,8;158,942,10,8;264,925,10,8;264,942,10,8');
    frame(304, 868, 70, 105);
    fillAll(G, '306,870,18,20;354,870,18,20;306,948,20,24;352,948,20,24');
    pins(306, 898, 5, 0, 10, 10, 6);
    pins(362, 898, 5, 0, 10, 10, 6);
    frame(400, 905, 228, 53);
    pins(432, 906, 17, 10, 0, 5, 7);
    pins(432, 949, 17, 10, 0, 5, 7);
    fillAll(G, '402,912,8,9;402,940,8,9;615,912,8,9;615,940,8,9');
    frame(441, 532, 49, 57);
    rect(441, 543, 30, 30, G);
    ic('394,135,38,32;535,190,40,38;655,766,40,42;304,490,30,55;304,556,28,42;490,487,34,45;466,606,33,46;466,652,33,48;503,620,44,36;511,664,31,46;472,706,30,45;475,411,32,46;558,375,48,30;628,445,44,40;652,497,40,32;544,515,30,30;410,486,28,22;486,344,26,24;475,290,22,28;528,378,26,20;538,420,24,18;394,562,26,22;250,757,30,20;646,406,26,20');
    frame(658, 820, 54, 51);
    rect(674, 822, 26, 14, G);
    rect(674, 855, 26, 14, G);
    rect(660, 840, 9, 12, Y);
    rect(702, 840, 9, 12, Y);
    // angled antenna switch
    turned(645, 180, 90, 26, 45, W);
    turned(645, 180, 86, 22, 45, BOARD);
    turned(622, 158, 24, 26, 45, G);
    turned(640, 178, 26, 12, 45, Y);
    turned(663, 206, 16, 30, 45, Y);
    turned(683, 207, 14, 14, 45, Y);
    turned(632, 214, 16, 14, 45, G);
    turned(645, 230, 14, 14, 45, Y);
    turned(613, 165, 10, 24, 45, Y);
    out.push(`<rect x="620" y="376" width="24" height="24" fill="none" stroke="${W}" stroke-width="3" transform="rotate(45 632 388)"/>`);
    grid(592, 436, 28, 30, 9);
    grid(586, 516, 18, 40, 9);
    grid(528, 544, 18, 30, 9);
    grid(536, 582, 16, 26, 9);
    parts('523,122,10,28;523,152,10,28;540,132,12,34;536,122,18,7;258,458,14,32;258,494,14,30;258,530,14,30;258,564,14,28;164,424,24,10;195,424,22,10;144,502,8,18;150,362,10,30;443,92,12,26;426,92,10,28;412,92,8,18;394,102,10,28;382,110,8,18;510,182,18,7;238,312,18,14;238,332,18,20;142,286,16,20;142,312,16,18;142,336,16,20;232,472,18,14;232,490,18,22;232,516,18,14');
    pack('136,598,18,20;300,266,150,14;440,286,28,100;455,264,58,26;500,290,12,50;472,318,40,24;298,388,44,108;418,395,56,90;484,344,140,26;596,310,22,60;508,372,100,70;528,490,84,24;576,515,30,44;360,392,60,12;342,474,66,58;340,530,20,40;374,540,50,60;642,430,52,66;642,496,12,66;656,530,40,30;406,618,40,178;298,628,9,150;545,690,140,20;545,712,60,16;500,726,120,28;500,760,56,8;520,800,70,66;308,790,134,18;318,620,84,9;185,735,60,30;392,172,72,18;434,152,30,18;502,204,20,26;470,878,80,18;284,908,18,48;378,910,16,44;492,545,34,70;640,770,9,36;494,458,40,26;508,426,26,36;616,726,10,30');
    label('U3301', 372, 338, 24);
    label('U3600', 357, 707, 36, 1);
    label('U3500', 615, 627, 27);
    label('J1902', 198, 331, 22, 1);
    label('J1901', 196, 552, 24, 1);
    label('J1501', 213, 937, 26);
    label('J2702', 340, 919, 27, 1);
    label('J2101', 511, 930, 26);
    dots(B, '612,627;622,627');
});

[[703, 296], [1153, 296], [703, 696], [1153, 696]].forEach(([x, y]) => {
    out.push(`<text class="watermark" x="${x}" y="${y}" transform="rotate(-45 ${x} ${y})">XZZ@XZZHK</text>`);
});

document.getElementById('board').innerHTML = out.join('');
```
